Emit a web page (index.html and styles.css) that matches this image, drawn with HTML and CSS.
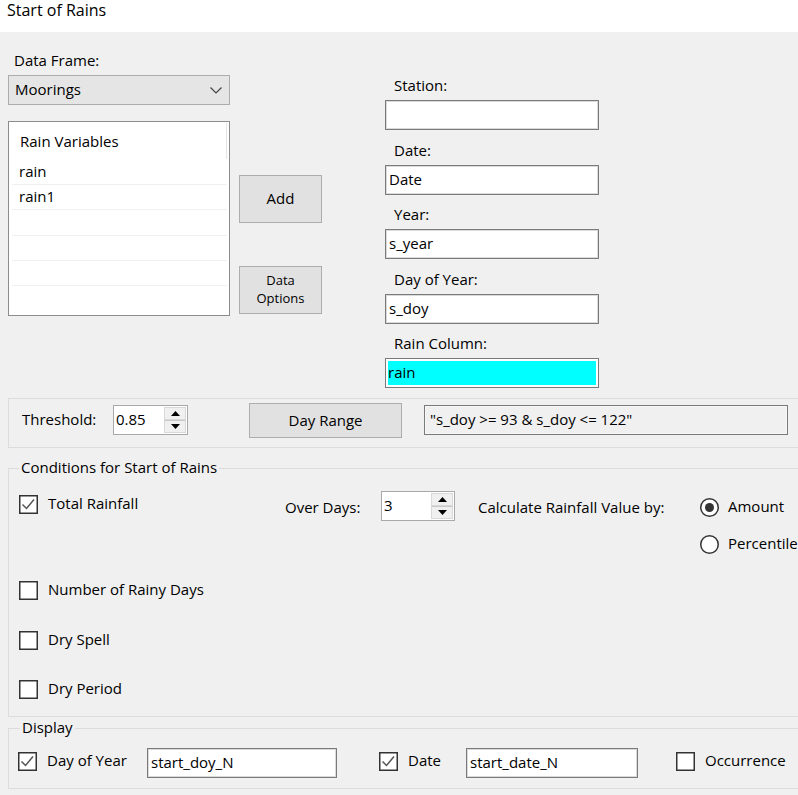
FILE: index.html
```html
<!DOCTYPE html>
<html>
<head>
<meta charset="utf-8">
<title>Start of Rains</title>
<link rel="stylesheet" href="styles.css">
</head>
<body>
<div class="titlebar">Start of Rains</div>
<div class="main">
  <div class="top">
    <div class="col-left">
      <div class="lbl df-lbl">Data Frame:</div>
      <div class="combo"><span>Moorings</span><svg class="chev" width="12" height="7" viewBox="0 0 12 7"><polyline points="0.5,0.5 6,6 11.5,0.5" fill="none" stroke="#444" stroke-width="1.2"/></svg></div>
      <div class="listbox">
        <div class="lb-head"><span>Rain Variables</span><span class="lb-sep"></span></div>
        <div class="lb-row">rain</div>
        <div class="lb-row">rain1</div>
        <div class="lb-row"></div>
        <div class="lb-row"></div>
        <div class="lb-row"></div>
      </div>
    </div>
    <div class="col-btns">
      <div class="btn btn-add">Add</div>
      <div class="btn btn-opts">Data<br>Options</div>
    </div>
    <div class="col-fields">
      <div class="field"><div class="lbl">Station:</div><div class="tb"></div></div>
      <div class="field"><div class="lbl">Date:</div><div class="tb">Date</div></div>
      <div class="field"><div class="lbl">Year:</div><div class="tb">s_year</div></div>
      <div class="field"><div class="lbl">Day of Year:</div><div class="tb">s_doy</div></div>
      <div class="field"><div class="lbl">Rain Column:</div><div class="tb tb-sel"><span class="sel">rain</span></div></div>
    </div>
  </div>

  <div class="threshold">
    <div class="lbl th-lbl">Threshold:</div>
    <div class="spin th-spin">
      <span class="spin-val">0.85</span>
      <div class="spin-btns">
        <span class="sb"><svg width="9" height="5" viewBox="0 0 9 5"><polygon points="0,5 4.5,0 9,5" fill="#000"/></svg></span>
        <span class="sb"><svg width="9" height="5" viewBox="0 0 9 5"><polygon points="0,0 4.5,5 9,0" fill="#000"/></svg></span>
      </div>
    </div>
    <div class="btn btn-range">Day Range</div>
    <div class="tb tb-range">"s_doy &gt;= 93 &amp; s_doy &lt;= 122"</div>
  </div>

  <fieldset class="group conditions">
    <legend>Conditions for Start of Rains</legend>
    <div class="cond-row">
      <div class="chk c-total">
        <svg class="cb" width="19" height="19" viewBox="0 0 19 19"><rect x="0.75" y="0.75" width="17.5" height="17.5" fill="#fff" stroke="#333" stroke-width="1.5"/><polyline points="3.5,9.5 7.5,13.5 15,4.5" fill="none" stroke="#555" stroke-width="1.5"/></svg>
        <span>Total Rainfall</span>
      </div>
      <div class="lbl c-over">Over Days:</div>
      <div class="spin c-spin">
        <span class="spin-val">3</span>
        <div class="spin-btns">
          <span class="sb"><svg width="9" height="5" viewBox="0 0 9 5"><polygon points="0,5 4.5,0 9,5" fill="#000"/></svg></span>
          <span class="sb"><svg width="9" height="5" viewBox="0 0 9 5"><polygon points="0,0 4.5,5 9,0" fill="#000"/></svg></span>
        </div>
      </div>
      <div class="lbl c-calc">Calculate Rainfall Value by:</div>
      <div class="radios">
        <div class="radio">
          <svg width="19" height="19" viewBox="0 0 19 19"><circle cx="9.5" cy="9.5" r="8.75" fill="#fff" stroke="#333" stroke-width="1.5"/><circle cx="9.5" cy="9.5" r="4.5" fill="#333"/></svg>
          <span>Amount</span>
        </div>
        <div class="radio">
          <svg width="19" height="19" viewBox="0 0 19 19"><circle cx="9.5" cy="9.5" r="8.75" fill="#fff" stroke="#333" stroke-width="1.5"/></svg>
          <span>Percentile</span>
        </div>
      </div>
    </div>
    <div class="chk c-rainy">
      <svg class="cb" width="19" height="19" viewBox="0 0 19 19"><rect x="0.75" y="0.75" width="17.5" height="17.5" fill="#fff" stroke="#333" stroke-width="1.5"/></svg>
      <span>Number of Rainy Days</span>
    </div>
    <div class="chk c-spell">
      <svg class="cb" width="19" height="19" viewBox="0 0 19 19"><rect x="0.75" y="0.75" width="17.5" height="17.5" fill="#fff" stroke="#333" stroke-width="1.5"/></svg>
      <span>Dry Spell</span>
    </div>
    <div class="chk c-period">
      <svg class="cb" width="19" height="19" viewBox="0 0 19 19"><rect x="0.75" y="0.75" width="17.5" height="17.5" fill="#fff" stroke="#333" stroke-width="1.5"/></svg>
      <span>Dry Period</span>
    </div>
  </fieldset>

  <fieldset class="group display">
    <legend>Display</legend>
    <div class="disp-row">
      <div class="chk d-doy">
        <svg class="cb" width="19" height="19" viewBox="0 0 19 19"><rect x="0.75" y="0.75" width="17.5" height="17.5" fill="#fff" stroke="#333" stroke-width="1.5"/><polyline points="3.5,9.5 7.5,13.5 15,4.5" fill="none" stroke="#555" stroke-width="1.5"/></svg>
        <span>Day of Year</span>
      </div>
      <div class="tb tb-doy">start_doy_N</div>
      <div class="chk d-date">
        <svg class="cb" width="19" height="19" viewBox="0 0 19 19"><rect x="0.75" y="0.75" width="17.5" height="17.5" fill="#fff" stroke="#333" stroke-width="1.5"/><polyline points="3.5,9.5 7.5,13.5 15,4.5" fill="none" stroke="#555" stroke-width="1.5"/></svg>
        <span>Date</span>
      </div>
      <div class="tb tb-date">start_date_N</div>
      <div class="chk d-occ">
        <svg class="cb" width="19" height="19" viewBox="0 0 19 19"><rect x="0.75" y="0.75" width="17.5" height="17.5" fill="#fff" stroke="#333" stroke-width="1.5"/></svg>
        <span>Occurrence</span>
      </div>
    </div>
  </fieldset>
</div>
</body>
</html>
```
FILE: styles.css
```css
html, body {
  margin: 0;
  padding: 0;
}
body {
  width: 798px;
  height: 795px;
  overflow: hidden;
  background: #f0f0f0;
  color: #000;
  font-family: "Open Sans", "Noto Sans", sans-serif;
  font-size: 15px;
  line-height: 20px;
}
.titlebar {
  height: 32px;
  background: #fff;
  padding-left: 7px;
  font-size: 16px;
  line-height: 20px;
  box-sizing: border-box;
}
.main {
  background: #f0f0f0;
  height: 763px;
  overflow: hidden;
}
.lbl {
  line-height: 18px;
  padding-bottom: 2px;
  white-space: nowrap;
}

/* top section */
.top {
  display: flex;
  align-items: flex-start;
  padding-left: 8px;
}
.col-left {
  width: 222px;
  padding-top: 19px;
}
.df-lbl {
  padding-left: 6px;
  margin-bottom: 4px;
}
.combo {
  height: 30px;
  box-sizing: border-box;
  border: 1px solid #acacac;
  background: #e5e5e5;
  display: flex;
  align-items: center;
  justify-content: space-between;
  padding: 0 7px 2px 6px;
}
.combo .chev {
  margin-top: 2px;
}
.listbox {
  margin-top: 16px;
  height: 195px;
  box-sizing: border-box;
  border: 1px solid #8c8c8c;
  background: #fff;
  padding: 0 2px 0 3px;
}
.lb-head {
  height: 38px;
  display: flex;
  align-items: center;
  justify-content: space-between;
  padding-left: 8px;
  padding-bottom: 1px;
  box-sizing: border-box;
}
.lb-sep {
  width: 1px;
  height: 36px;
  background: #e5e5e5;
  align-self: flex-start;
  margin-top: 1px;
}
.lb-row {
  height: 24.2px;
  border-bottom: 1px solid #f0f0f0;
  padding-left: 7px;
  line-height: 22px;
}

.col-btns {
  margin-left: 9px;
  width: 83px;
  padding-top: 143px;
}
.btn {
  box-sizing: border-box;
  border: 1px solid #adadad;
  background: #e1e1e1;
  display: flex;
  align-items: center;
  justify-content: center;
  text-align: center;
  padding-bottom: 2px;
}
.btn-add {
  height: 48px;
}
.btn-opts {
  height: 48px;
  margin-top: 43px;
  font-size: 13px;
  line-height: 18px;
}

.col-fields {
  margin-left: 63px;
  width: 214px;
  padding-top: 44px;
}
.field + .field {
  margin-top: 10.5px;
}
.field .lbl {
  padding-left: 9px;
  margin-bottom: 4px;
}
.tb {
  height: 30px;
  box-sizing: border-box;
  border: 1px solid #7a7a7a;
  box-shadow: inset 0 0 0 1px #dadada;
  background: #fff;
  padding-left: 3px;
  line-height: 26px;
  white-space: nowrap;
  overflow: hidden;
}
.tb-sel {
  padding: 2px;
  box-shadow: none;
}
.sel {
  display: block;
  height: 24px;
  line-height: 22px;
  background: #00ffff;
}

/* threshold bar */
.threshold {
  margin: 10px 0 0 8px;
  width: 800px;
  height: 50px;
  box-sizing: border-box;
  border: 1px solid #dcdcdc;
  display: flex;
  align-items: flex-start;
  padding: 4px 0 0 13px;
}
.th-lbl {
  width: 91px;
  margin-top: 7px;
}
.spin {
  height: 30px;
  box-sizing: border-box;
  border: 1px solid #a9a9a9;
  background: #fff;
  display: flex;
}
.spin-val {
  padding-left: 2px;
  line-height: 26px;
}
.spin-btns {
  margin: 1px 1px 1px auto;
  width: 22px;
  display: flex;
  flex-direction: column;
}
.sb {
  flex: 1;
  display: flex;
  align-items: center;
  justify-content: center;
  background: #f0f0f0;
  border: 1px solid #d9d9d9;
}
.sb + .sb {
  border-top: 1px solid #c8c8c8;
}
.th-spin {
  width: 75px;
  margin-top: 2px;
}
.btn-range {
  margin-left: 61px;
  width: 153px;
  height: 35px;
}
.tb-range {
  margin-left: 22px;
  margin-top: 2px;
  width: 364px;
  background: #f0f0f0;
  padding-left: 5px;
  box-shadow: inset 0 0 0 1px #f7f7f7;
}

/* group boxes */
.group {
  margin: 10px 0 0 8px;
  width: 800px;
  box-sizing: border-box;
  border: 1px solid #dcdcdc;
  min-width: 0;
}
.group legend {
  padding: 0 2px;
  line-height: 18px;
  padding-bottom: 2px;
}
.conditions {
  padding: 12px 0 17px 10px;
}
.cond-row {
  display: grid;
  grid-template-columns: 266px 96px 97px 222px 1fr;
  align-items: start;
}
.chk, .radio {
  display: flex;
  align-items: center;
  gap: 10px;
  height: 20px;
  white-space: nowrap;
}
.chk span, .radio span {
  line-height: 18px;
  padding-bottom: 2px;
}
.radio {
  gap: 9px;
}
.cb {
  flex: none;
}
.c-total {
  margin-top: 4px;
}
.c-over, .c-calc {
  margin-top: 8px;
}
.c-spin {
  width: 74px;
  margin-top: 1px;
}
.radios {
  margin-top: 7px;
  display: flex;
  flex-direction: column;
  gap: 17px;
}
.c-rainy {
  margin-top: 26px;
}
.c-spell {
  margin-top: 30px;
}
.c-period {
  margin-top: 29px;
}

.display {
  margin-top: 1px;
  padding: 10px 0 10px 9px;
}
.display legend {
  margin-left: 2px;
}
.disp-row {
  display: flex;
  align-items: center;
  height: 30px;
}
.disp-row .chk {
  margin-bottom: 4px;
}
.d-doy {
  width: 129px;
}
.tb-doy {
  width: 190px;
}
.d-date {
  margin-left: 42px;
  width: 87px;
}
.tb-date {
  width: 172px;
}
.d-occ {
  margin-left: 38px;
}
```
